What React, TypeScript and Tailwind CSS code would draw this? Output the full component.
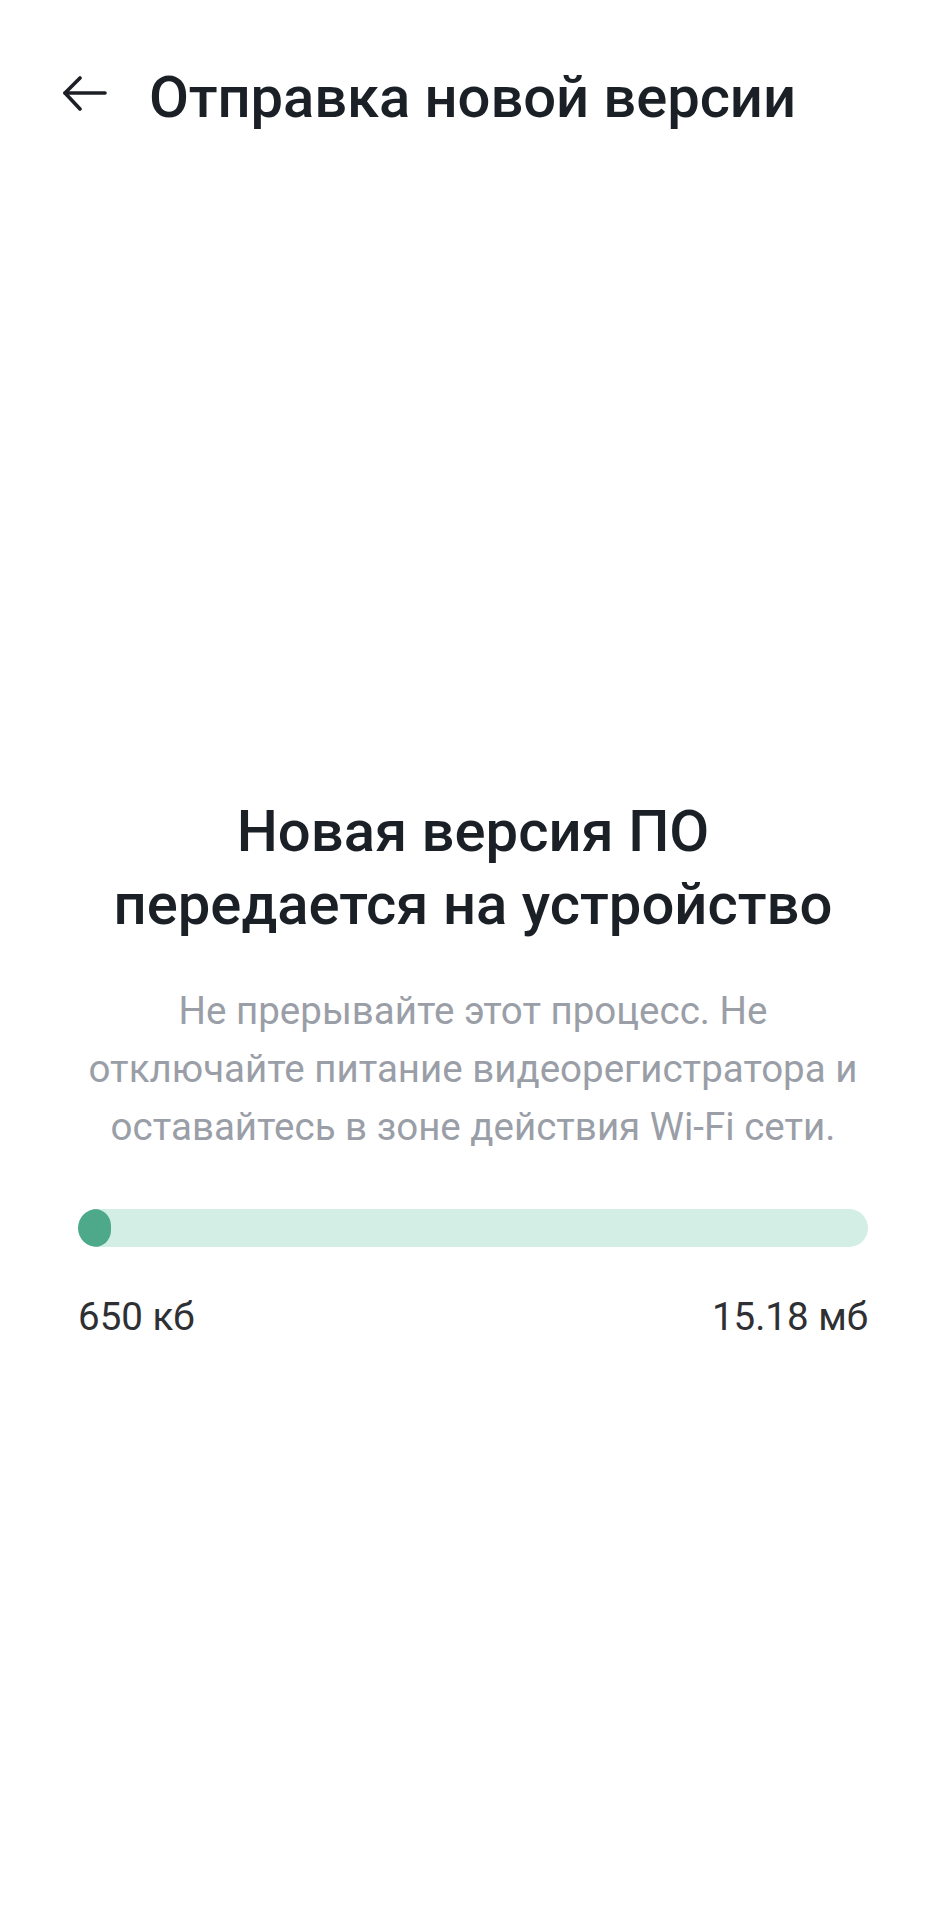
export default function App() {
  const loaded = 650 / 1024
  const total = 15.18
  const pct = Math.max((loaded / total) * 100, 4.2)

  return (
    <div
      className="min-h-[1919px] w-full bg-white"
      style={{ fontFamily: 'Roboto, "Noto Sans", sans-serif' }}
    >
      <header className="flex items-start pl-[62px] pt-[68px]">
        <svg
          width="46"
          height="36"
          viewBox="0 0 46 36"
          fill="none"
          stroke="#1c1f25"
          strokeWidth="3.6"
          strokeLinecap="round"
          strokeLinejoin="round"
          className="mt-[8px] shrink-0"
        >
          <path d="M43 17H3" />
          <path d="M18 2L3 17L18 33" />
        </svg>
        <h1 className="ml-[41px] text-[58px] font-medium leading-none tracking-[-0.1px] text-[#1b1f26]">
          Отправка новой версии
        </h1>
      </header>

      <main className="mt-[669px] pl-[78px] pr-[75px]">
        <h2 className="text-center text-[58px] font-medium leading-[73px] text-[#1b1f26]">
          Новая версия ПО
          <br />
          передается на устройство
        </h2>
        <p className="mt-[41px] text-center text-[38.5px] leading-[58px] text-[#9a9ea7]">
          Не прерывайте этот процесс. Не
          <br />
          отключайте питание видеорегистратора и
          <br />
          оставайтесь в зоне действия Wi-Fi сети.
        </p>

        <div className="mt-[53px] h-[38px] w-full overflow-hidden rounded-full bg-[#d3eee5]">
          <div
            className="h-full rounded-full bg-[#4ea98a]"
            style={{ width: `${pct}%` }}
          />
        </div>

        <div className="mt-[51px] flex items-center justify-between text-[38.5px] leading-[38.5px] text-[#2f3033]">
          <span>650 кб</span>
          <span>15.18 мб</span>
        </div>
      </main>
    </div>
  )
}
